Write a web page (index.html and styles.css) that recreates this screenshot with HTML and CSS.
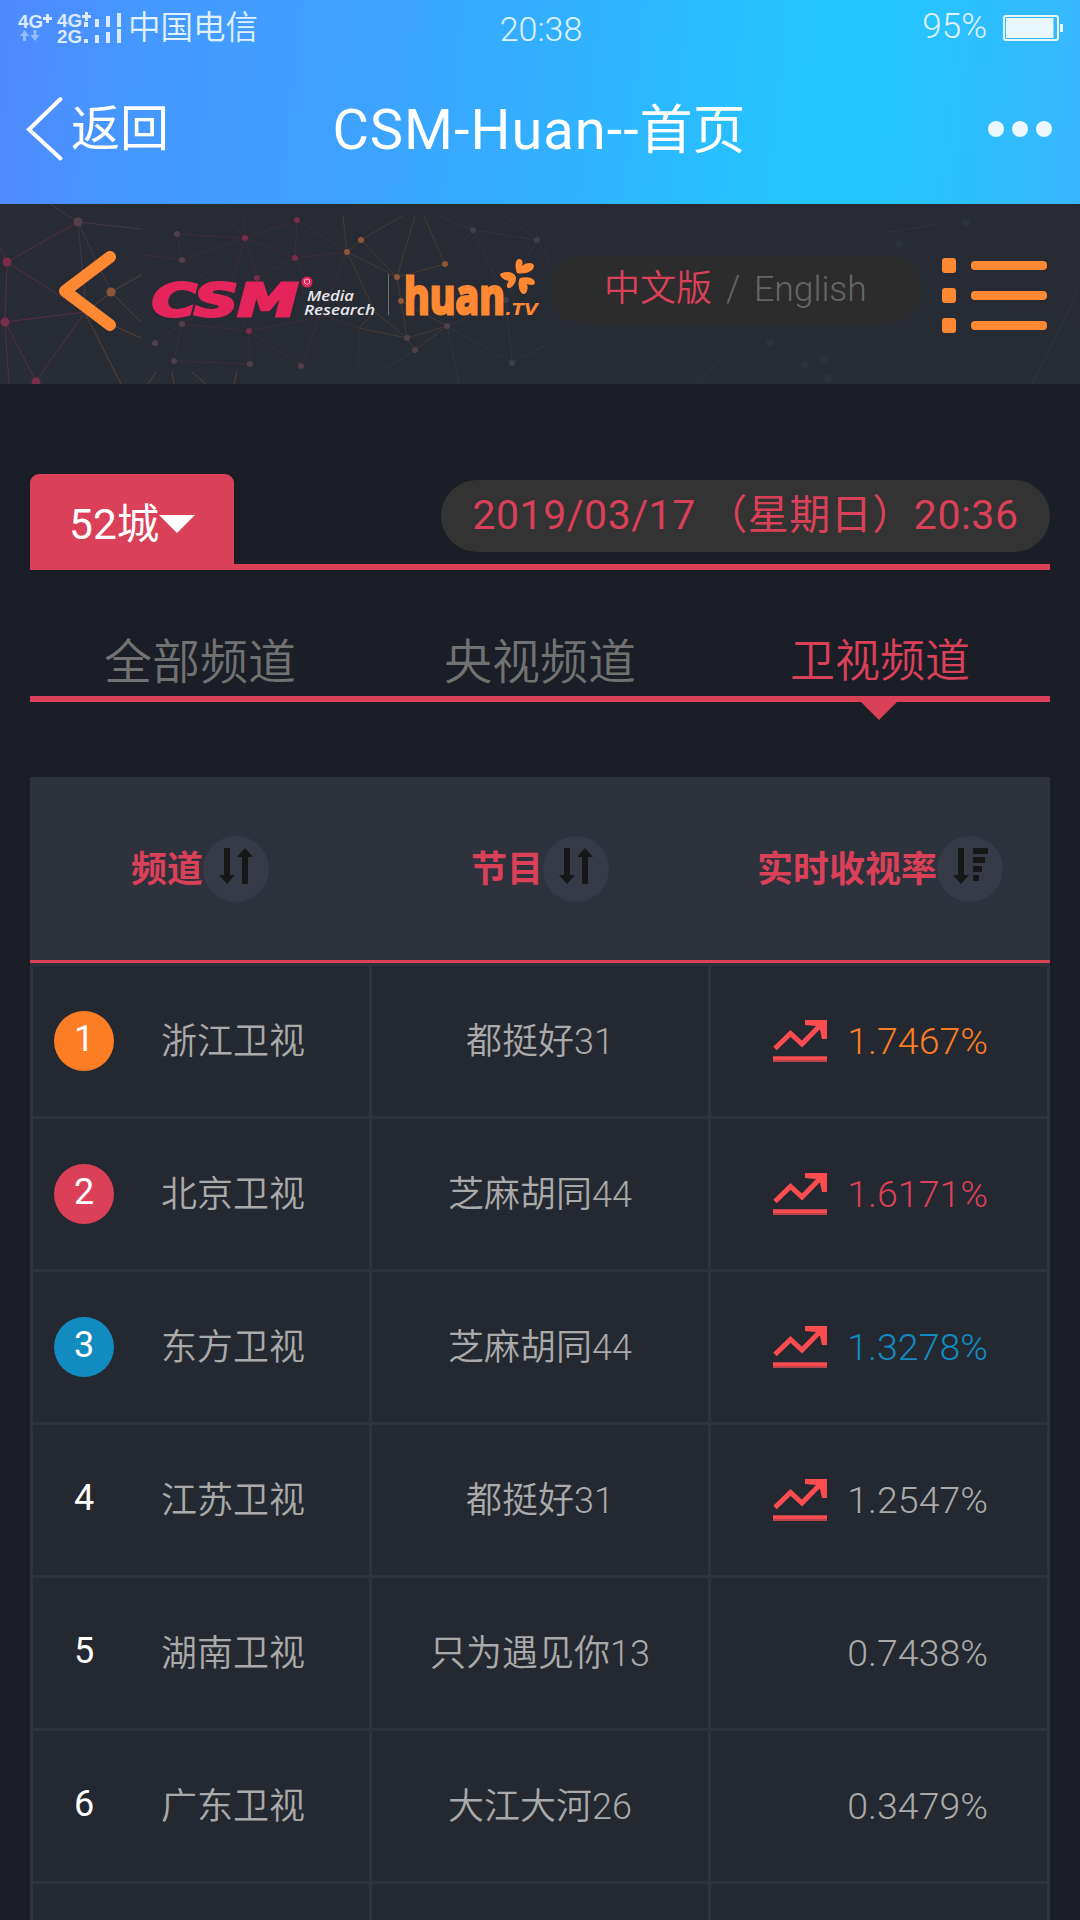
FILE: index.html
```html
<!DOCTYPE html>
<html lang="zh-CN">
<head>
    <meta charset="UTF-8">
    <meta name="viewport" content="width=device-width, initial-scale=1.0">
    <title>CSM-Huan--首页</title>
    <link rel="stylesheet" href="styles.css">
</head>
<body>
    <svg class="defs" width="0" height="0">
        <symbol id="icon-sort" viewBox="0 0 34 36">
            <path d="M5 0h6v27h5l-8 9-8-9h5zM23 36h6V9h5l-8-9-8 9h5z"/>
        </symbol>
        <symbol id="icon-sort-desc" viewBox="0 0 35 36">
            <path d="M5 0h6v27h5l-8 9-8-9h5zM20 0h15v6H20zM20 9h12v6H20zM20 18h9v6h-9zM20 27h6v6h-6z"/>
        </symbol>
        <symbol id="icon-trend" viewBox="0 0 54 42">
            <path d="M2 28.500L17.500 13.500L29 24L47 5.500" fill="none" stroke="#fb4c4f" stroke-width="5"/>
            <path d="M32 0h22v19h-5l-2-9-4-4-11-1z" fill="#fb4c4f"/>
            <path d="M0 36h54v6H0z" fill="#b94349"/>
            <path d="M0 37h54v3H0z" fill="#fb4c4f"/>
        </symbol>
    </svg>

    <div class="app-bar">
        <div class="status-bar">
            <div class="status-left">
                <svg class="signal" width="106" height="36" viewBox="0 0 106 36">
                    <g class="signal-text">
                        <text x="0" y="18" textLength="25" lengthAdjust="spacingAndGlyphs">4G</text>
                        <text x="39" y="17" textLength="25" lengthAdjust="spacingAndGlyphs">4G</text>
                        <text x="39" y="33" textLength="25" lengthAdjust="spacingAndGlyphs">2G</text>
                    </g>
                    <path d="M25 7h9v3h-9zM28 4h3v9h-3zM64 5h9v3h-9zM67 2h3v9h-3z"/>
                    <path d="M66 12h4v5h-4zM77 9h4v8h-4zM88 6h4v11h-4zM99 3h4v14h-4zM66 29h4v4h-4zM77 25h4v8h-4zM88 22h4v11h-4zM99 19h4v14h-4z"/>
                    <path opacity=".5" d="M6.500 20l4.500 6H8v5H5v-5H2zM17 31l-4.500-6h3v-5h3v5h3z"/>
                </svg>
                <span class="carrier">中国电信</span>
            </div>
            <span class="clock">20:38</span>
            <div class="status-right">
                <span class="battery-text">95%</span>
                <svg width="61" height="26" viewBox="0 0 61 26">
                    <rect x="1" y="1" width="54" height="24" rx="2" fill="none" stroke="#e6f7ff" stroke-width="2"/>
                    <rect x="3" y="3" width="47.500" height="20" fill="#e9f8ff"/>
                    <rect x="57" y="9" width="3" height="8" fill="#e6f7ff"/>
                </svg>
            </div>
        </div>
        <div class="nav-bar">
            <div class="back">
                <svg width="38" height="66" viewBox="0 0 38 66">
                    <path d="M34.500 3L3 33.500L34.500 62.500" fill="none" stroke="#fff" stroke-width="4" stroke-linecap="round"/>
                </svg>
                <span>返回</span>
            </div>
            <div class="nav-title"><span>CSM-Huan--</span>首页</div>
            <div class="more"><i></i><i></i><i></i></div>
        </div>
    </div>

    <header class="header">
        <svg class="network" viewBox="0 0 1080 180">
            <g fill="none" stroke="#7a2f45" stroke-opacity=".6">
                <path d="M7 58L5 118L36 177M7 58L0 43M7 58L78 18M7 58L85 108L36 177M5 118L85 108M5 118L9 180"/>
            </g>
            <g fill="none" stroke="#574249" stroke-opacity=".6">
                <path d="M78 18L50 0M78 18L141 25M78 18L111 88M78 18L86 105"/>
            </g>
            <g fill="none" stroke="#80502f" stroke-opacity=".6">
                <path d="M111 88L141 71M111 88L141 118M111 88L85 109L141 134M85 109L121 180M148 180l8-12M172 168l2 12M192 168l14 12M237 168l-3 12"/>
            </g>
            <g fill="none" stroke="#6b2e42" stroke-opacity=".35">
                <path d="M245 34L182 56L177 30L245 34L297 16L295 54L245 34L257 74L295 54L347 48L297 16M245 34L228 92L182 120L155 139M182 56L228 92L249 127L250 160L174 157L182 120M249 127L301 162L320 112L347 48M257 74L228 92M249 127L325 112M295 54L325 112L358 124M182 120L249 127M226 12L245 34L243 12M182 56L145 51"/>
            </g>
            <g fill="none" stroke="#8a572f" stroke-opacity=".35">
                <path d="M347 48L361 36L402 12M361 36L397 73L347 48L375 108L407 134L401 97L397 73L415 12M424 12L445 60L397 73M347 48L343 12M407 134L359 124L375 108M407 134L447 122L401 97M407 134L415 146L447 122"/>
            </g>
            <g fill="none" stroke="#414652" stroke-opacity=".35">
                <path d="M445 60L473 26L537 36L549 56M473 26L440 12M473 26L506 96L512 159L447 122L459 180M512 159L548 140M537 36L505 12M415 146L380 168M359 124L358 168M537 36L506 96L447 122M699 180L740 130M940 20L890 28M1078 86L1050 145L1032 180"/>
            </g>
            <g fill="#7a2d48">
                <circle cx="7" cy="58" r="4.500"/><circle cx="5" cy="118" r="4.500"/><circle cx="36" cy="178" r="4.500"/>
                <circle cx="245" cy="34" r="3"/><circle cx="297" cy="16" r="3"/><circle cx="295" cy="54" r="3"/><circle cx="257" cy="74" r="3"/><circle cx="249" cy="127" r="3"/>
            </g>
            <g fill="#514049">
                <circle cx="78" cy="18" r="4.500"/><circle cx="177" cy="30" r="3"/><circle cx="182" cy="56" r="3"/><circle cx="182" cy="120" r="3"/><circle cx="155" cy="139" r="3"/><circle cx="174" cy="157" r="3"/><circle cx="250" cy="160" r="3"/><circle cx="301" cy="162" r="3"/><circle cx="407" cy="134" r="3"/><circle cx="415" cy="146" r="3"/><circle cx="447" cy="122" r="3"/>
            </g>
            <g fill="#8d5639">
                <circle cx="111" cy="88" r="4.500"/><circle cx="347" cy="48" r="3"/><circle cx="361" cy="36" r="3"/><circle cx="397" cy="73" r="3"/><circle cx="401" cy="97" r="3"/><circle cx="445" cy="60" r="3"/>
            </g>
            <g fill="#3a404e">
                <circle cx="473" cy="26" r="3"/><circle cx="537" cy="36" r="3"/><circle cx="506" cy="96" r="3"/><circle cx="512" cy="159" r="3"/>
            </g>
            <g fill="#2b323b">
                <circle cx="770" cy="139" r="4"/><circle cx="805" cy="161" r="4"/><circle cx="824" cy="155" r="4"/><circle cx="828" cy="174" r="4"/><circle cx="899" cy="40" r="4"/><circle cx="966" cy="19" r="4"/>
            </g>
        </svg>
        <svg class="header-back" width="62" height="84" viewBox="0 0 62 84">
            <path d="M54 8L9 42L54 76" fill="none" stroke="#ff8832" stroke-width="12" stroke-linejoin="round" stroke-linecap="round"/>
        </svg>
        <svg class="logo" width="390" height="60" viewBox="0 0 390 60">
            <text class="logo-csm" x="1" y="46" textLength="146" lengthAdjust="spacingAndGlyphs">CSM</text>
            <circle cx="156" cy="12" r="5.500" fill="#e6245c"/>
            <path d="M153.500 10l2.500-1 2.500 1v3l-2.500 1.500-2.500-1.500z" fill="none" stroke="#f3b3c5"/>
            <text class="logo-small" x="156" y="31" textLength="47" lengthAdjust="spacingAndGlyphs">Media</text>
            <text class="logo-small" x="153" y="45" textLength="71" lengthAdjust="spacingAndGlyphs">Research</text>
            <path d="M237.500 4v41" stroke="#6d7077"/>
            <text class="logo-huan" x="253" y="44" textLength="101" lengthAdjust="spacingAndGlyphs">huan</text>
            <text class="logo-tv" x="354" y="45" textLength="33" lengthAdjust="spacingAndGlyphs">.TV</text>
        </svg>
        <svg class="flower" width="38" height="38" viewBox="0 0 38 38">
            <path fill="#ff8832" d="M18 15C15 7 17 1 20 1C24 1 24 5 23 8C27 4 35 4 35 8C35 13 26 17 18 15zM1 16C6 12 17 14 17 20C17 26 12 31 9 30C7 29 8 25 10 23C5 22 1 19 1 16zM21 20C28 18 36 20 36 25C35 28 31 27 28 26C30 31 27 37 24 36C20 34 18 25 21 20z"/>
        </svg>
        <div class="language">
            <span class="lang-active">中文版</span>
            <span class="slash">/</span>
            <span class="lang-en">English</span>
        </div>
        <svg class="menu" width="106" height="76" viewBox="0 0 106 76">
            <g fill="#ff8832">
                <rect x="0" y="0" width="14" height="15" rx="3"/><rect x="29" y="3" width="76" height="9" rx="4"/>
                <rect x="0" y="30" width="14" height="15" rx="3"/><rect x="29" y="33" width="76" height="9" rx="4"/>
                <rect x="0" y="60" width="14" height="15" rx="3"/><rect x="29" y="63" width="76" height="9" rx="4"/>
            </g>
        </svg>
    </header>

    <main class="container">
        <div class="top-bar">
            <div class="city">52城<i class="caret"></i></div>
            <div class="date">2019/03/17 （星期日）20:36</div>
        </div>
        <div class="tabs">
            <div class="tab">全部频道</div>
            <div class="tab">央视频道</div>
            <div class="tab active">卫视频道</div>
        </div>

        <div class="table">
            <div class="table-head">
                <div><span class="label">频道</span><span class="sort"><svg width="34" height="36"><use href="#icon-sort"/></svg></span></div>
                <div><span class="label">节目</span><span class="sort"><svg width="34" height="36"><use href="#icon-sort"/></svg></span></div>
                <div><span class="label">实时收视率</span><span class="sort"><svg width="35" height="36"><use href="#icon-sort-desc"/></svg></span></div>
            </div>
            <div class="row first">
                <div class="channel"><span class="rank">1</span><span class="name">浙江卫视</span></div>
                <div class="program">都挺好31</div>
                <div class="rate"><svg width="54" height="42"><use href="#icon-trend"/></svg><span>1.7467%</span></div>
            </div>
            <div class="row second">
                <div class="channel"><span class="rank">2</span><span class="name">北京卫视</span></div>
                <div class="program">芝麻胡同44</div>
                <div class="rate"><svg width="54" height="42"><use href="#icon-trend"/></svg><span>1.6171%</span></div>
            </div>
            <div class="row third">
                <div class="channel"><span class="rank">3</span><span class="name">东方卫视</span></div>
                <div class="program">芝麻胡同44</div>
                <div class="rate"><svg width="54" height="42"><use href="#icon-trend"/></svg><span>1.3278%</span></div>
            </div>
            <div class="row">
                <div class="channel"><span class="rank">4</span><span class="name">江苏卫视</span></div>
                <div class="program">都挺好31</div>
                <div class="rate"><svg width="54" height="42"><use href="#icon-trend"/></svg><span>1.2547%</span></div>
            </div>
            <div class="row">
                <div class="channel"><span class="rank">5</span><span class="name">湖南卫视</span></div>
                <div class="program">只为遇见你13</div>
                <div class="rate"><span>0.7438%</span></div>
            </div>
            <div class="row">
                <div class="channel"><span class="rank">6</span><span class="name">广东卫视</span></div>
                <div class="program">大江大河26</div>
                <div class="rate"><span>0.3479%</span></div>
            </div>
            <div class="row">
                <div class="channel"></div>
                <div></div>
                <div class="rate"></div>
            </div>
        </div>
    </main>
</body>
</html>
```

FILE: styles.css
```css
* {
    box-sizing: border-box;
}
body {
    margin: 0;
    height: 1920px;
    overflow: hidden;
    background: #1b1e26;
    font-family: Roboto, "Noto Sans CJK SC", sans-serif;
    font-weight: 350;
    line-height: 1.2;
    white-space: nowrap;
}
svg {
    display: block;
    flex: none;
}
.defs {
    position: absolute;
}

/* phone bar */
.app-bar {
    height: 204px;
    background: linear-gradient(96deg, #4f89ff 0%, #4598ff 13%, #3fa1ff 32%, #31b1ff 52%, #25c5ff 74%, #25c5ff 82%, #38b6ff 100%);
    color: #fff;
}
.status-bar {
    display: grid;
    grid-template-columns: 1fr auto 1fr;
    align-items: center;
    height: 54px;
    padding: 0 16px 0 18px;
    color: #e0f2ff;
    font-size: 34px;
    line-height: 54px;
}
.status-left, .status-right {
    display: flex;
    align-items: center;
}
.status-right {
    justify-content: flex-end;
    gap: 16px;
}
.signal {
    margin-right: 4px;
    fill: #dcebff;
    overflow: visible;
}
.signal-text {
    font: bold 19px "Liberation Sans", sans-serif;
}
.carrier {
    font-size: 32.5px;
}
.clock {
    padding-top: 2px;
}
.battery-text {
    padding-bottom: 2px;
    font-size: 35px;
}
.nav-bar {
    display: grid;
    grid-template-columns: 1fr auto 1fr;
    align-items: center;
    height: 150px;
    padding: 0 28px 0 26px;
}
.back {
    display: flex;
    align-items: center;
    gap: 7px;
    font-size: 49px;
    font-weight: 400;
}
.back span {
    padding-top: 3px;
}
.nav-title {
    padding-top: 4px;
    font-size: 53px;
    font-weight: 400;
}
.nav-title span {
    font-size: 56px;
    letter-spacing: 1px;
}
.more {
    display: flex;
    justify-content: flex-end;
    gap: 8px;
}
.more i {
    width: 16px;
    height: 16px;
    border-radius: 50%;
    background: #ebf8ff;
}

/* site header */
.header {
    position: relative;
    display: flex;
    align-items: flex-start;
    height: 180px;
    padding-left: 56px;
    background: linear-gradient(#282b34, #272b34 94%, #272d36);
}
.network {
    position: absolute;
    top: 0;
    left: 0;
    width: 1080px;
    height: 180px;
}
.header > * {
    flex: none;
}
.header-back {
    position: relative;
    margin-top: 45px;
}
.logo {
    position: relative;
    margin: 66px 0 0 33px;
    overflow: visible;
}
.logo-csm {
    font: italic bold 44px "DejaVu Sans", sans-serif;
    fill: #e6245c;
    stroke: #e6245c;
    stroke-width: 3px;
}
.logo-small {
    font: italic 600 15px "Open Sans", sans-serif;
    fill: #e8e8ea;
}
.logo-huan {
    font: bold 50px "Open Sans", sans-serif;
    fill: #ff8832;
    stroke: #ff8832;
    stroke-width: 3px;
}
.logo-tv {
    font: italic bold 15px "DejaVu Sans", sans-serif;
    fill: #ff8832;
}
.flower {
    position: absolute;
    top: 54px;
    left: 499px;
}
.language {
    position: relative;
    display: flex;
    width: 373px;
    height: 69px;
    margin: 51px 0 0 8px;
    padding-left: 55px;
    border-radius: 35px;
    background: #2c2c2c;
    color: #666;
    font-size: 36px;
    line-height: 69px;
}
.lang-active {
    width: 122px;
    color: #db4059;
}
.slash {
    width: 28px;
}
.lang-en {
    font-size: 35.5px;
}
.menu {
    position: relative;
    margin: 54px 0 0 20px;
}

/* city and date */
.container {
    padding: 90px 30px 0;
}
.top-bar {
    display: flex;
    justify-content: space-between;
    align-items: flex-start;
    height: 96px;
    border-bottom: 6px solid #db4059;
}
.city {
    display: flex;
    align-items: center;
    width: 204px;
    height: 90px;
    padding: 10px 0 0 39px;
    border-radius: 9px 9px 0 0;
    background: #db4059;
    color: #fff;
    font-size: 42.5px;
    font-weight: 400;
}
.caret {
    border: 18px solid transparent;
    border-top-color: #fff;
    border-bottom: 0;
}
.date {
    width: 609px;
    height: 72px;
    margin-top: 6px;
    border-radius: 36px;
    background: #333;
    color: #db4059;
    font-size: 41px;
    font-weight: 400;
    letter-spacing: .5px;
    line-height: 70px;
    text-align: center;
}

/* channel tabs */
.tabs {
    display: grid;
    grid-template-columns: repeat(3, 1fr);
    height: 132px;
    border-bottom: 6px solid #db4059;
}
.tab {
    position: relative;
    padding-top: 55px;
    color: #727272;
    font-size: 48px;
    line-height: 76px;
    text-align: center;
}
.tab.active {
    color: #db4059;
    font-size: 45px;
    line-height: 73px;
}
.tab.active::after {
    content: "";
    position: absolute;
    left: 151px;
    top: 132px;
    border: 18px solid transparent;
    border-top-color: #db4059;
    border-bottom: 0;
}

/* ratings table */
.table {
    margin-top: 75px;
    background: #2e323d;
}
.table-head {
    display: grid;
    grid-template-columns: repeat(3, 1fr);
    height: 186px;
    border-bottom: 3px solid #db4059;
    color: #db4059;
    font-size: 36px;
    font-weight: 700;
}
.table-head div {
    display: flex;
    justify-content: center;
    align-items: center;
}
.label {
    padding-top: 4px;
}
.sort {
    display: flex;
    justify-content: center;
    width: 66px;
    height: 66px;
    margin-top: 1px;
    padding-top: 12px;
    border-radius: 50%;
    background: #363b47;
    fill: #171717;
}
.row {
    display: grid;
    grid-template-columns: repeat(3, 336px);
    gap: 3px;
    height: 153px;
    padding: 3px 3px 0;
    color: #aaa;
    font-size: 36px;
}
.row:last-child {
    height: 39px;
}
.row > div {
    display: flex;
    align-items: center;
    background: #242830;
}
.channel {
    padding-left: 21px;
}
.rank {
    width: 60px;
    height: 60px;
    margin-right: 47px;
    border-radius: 50%;
    color: #fff;
    font-weight: 400;
    line-height: 57px;
    text-align: center;
}
.name {
    padding-top: 4px;
}
.row .program {
    justify-content: center;
    padding-top: 4px;
}
.row .rate {
    justify-content: flex-end;
    gap: 20px;
    padding-right: 59px;
    font-size: 37.5px;
}
.first .rank {
    background: #fc7d24;
}
.first .rate {
    color: #fc7d24;
}
.second .rank {
    background: #db4059;
}
.second .rate {
    color: #db4059;
}
.third .rank {
    background: #118bc0;
}
.third .rate {
    color: #118bc0;
}
```
